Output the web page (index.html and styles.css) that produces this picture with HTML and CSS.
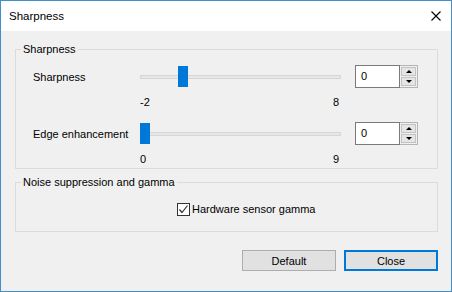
FILE: index.html
```html
<!DOCTYPE html>
<html lang="en">
<head>
    <meta charset="UTF-8">
    <title>Sharpness</title>
    <link rel="stylesheet" href="styles.css">
</head>
<body>
    <div class="window">
        <div class="titlebar">
            <span class="title">Sharpness</span>
            <svg class="close" width="10" height="10" viewBox="0 0 10 10">
                <path d="M0.5 0.5 L9.5 9.5 M9.5 0.5 L0.5 9.5" stroke="#000" stroke-width="1.1" fill="none"/>
            </svg>
        </div>

        <div class="client">
            <fieldset class="group group-sharpness">
                <legend>Sharpness</legend>

                <div class="setting">
                    <span class="setting-label">Sharpness</span>
                    <div class="slider">
                        <div class="track"></div>
                        <div class="thumb" style="left: calc((100% - 10px) * 0.2)"></div>
                    </div>
                    <div class="spin">
                        <div class="spin-edit">0</div>
                        <div class="spin-buttons">
                            <div class="spin-btn"><span class="arrow-up"></span></div>
                            <div class="spin-btn"><span class="arrow-down"></span></div>
                        </div>
                    </div>
                    <div class="ticks"><span>-2</span><span>8</span></div>
                </div>

                <div class="setting setting-second">
                    <span class="setting-label">Edge enhancement</span>
                    <div class="slider">
                        <div class="track"></div>
                        <div class="thumb" style="left: calc((100% - 10px) * 0)"></div>
                    </div>
                    <div class="spin">
                        <div class="spin-edit">0</div>
                        <div class="spin-buttons">
                            <div class="spin-btn"><span class="arrow-up"></span></div>
                            <div class="spin-btn"><span class="arrow-down"></span></div>
                        </div>
                    </div>
                    <div class="ticks"><span>0</span><span>9</span></div>
                </div>
            </fieldset>

            <fieldset class="group group-noise">
                <legend>Noise suppression and gamma</legend>
                <label class="check">
                    <span class="check-box">
                        <svg width="11" height="11" viewBox="0 0 11 11">
                            <path d="M1.5 5.5 L4 8.5 L9.5 1.5" stroke="#333" stroke-width="1.2" fill="none"/>
                        </svg>
                    </span>
                    Hardware sensor gamma
                </label>
            </fieldset>

            <div class="buttons">
                <button type="button">Default</button>
                <button type="button" class="primary">Close</button>
            </div>
        </div>
    </div>
</body>
</html>
```

FILE: styles.css
```css
body {
    margin: 0;
    font-family: "Liberation Sans", Arial, sans-serif;
    font-size: 11px;
    color: #000;
}

.window {
    width: 452px;
    height: 292px;
    box-sizing: border-box;
    border: 1px solid #3f8fc9;
    display: flex;
    flex-direction: column;
}

.titlebar {
    height: 30px;
    background: #fff;
    display: flex;
    align-items: center;
    justify-content: space-between;
    padding: 0 10px 0 8px;
}

.title {
    font-size: 11.5px;
    margin-top: -1px;
}

.client {
    flex: 1;
    background: #f0f0f0;
    padding: 0 13px 0 14px;
    display: flex;
    flex-direction: column;
}

.group {
    margin: 0;
    padding: 0;
    min-inline-size: 0;
    border: 1px solid #dcdcdc;
}

.group legend {
    margin-left: 5px;
    padding: 0 2px;
    line-height: 14px;
}

.group-sharpness {
    margin-top: 11px;
    padding-bottom: 2px;
}

.group-noise {
    margin-top: 6px;
    padding-bottom: 15px;
}

.setting {
    display: grid;
    grid-template-columns: 107px 201px 77px;
    grid-template-rows: 23px 14px;
    row-gap: 7px;
    margin: 9px 0 0 17px;
}

.setting-second {
    margin-top: 13px;
}

.setting-label {
    align-self: center;
    line-height: 14px;
}

.slider {
    position: relative;
}

.track {
    margin-top: 10px;
    height: 2px;
    border: 1px solid #d6d6d6;
    background: #e7e7e7;
}

.thumb {
    position: absolute;
    top: 1px;
    width: 10px;
    height: 21px;
    background: #0078d7;
}

.spin {
    justify-self: end;
    width: 63px;
    height: 23px;
    display: flex;
}

.spin-edit {
    flex: 1;
    background: #fff;
    border: 1px solid #7a7a7a;
    padding-left: 5px;
    line-height: 21px;
}

.spin-buttons {
    width: 15px;
    border: 1px solid #b5b5b5;
    border-left: none;
    padding: 1px;
    display: flex;
    flex-direction: column;
    gap: 1px;
}

.spin-btn {
    flex: 1;
    background: #e5e5e5;
    border: 1px solid #c3c3c3;
    display: flex;
    align-items: center;
    justify-content: center;
}

.arrow-up {
    border-left: 3px solid transparent;
    border-right: 3px solid transparent;
    border-bottom: 3px solid #000;
}

.arrow-down {
    border-left: 3px solid transparent;
    border-right: 3px solid transparent;
    border-top: 3px solid #000;
}

.ticks {
    grid-column: 2;
    display: flex;
    justify-content: space-between;
    padding-right: 2px;
    line-height: 14px;
}

.check {
    display: flex;
    align-items: center;
    gap: 2px;
    margin: 13px 0 0 161px;
    line-height: 14px;
}

.check-box {
    width: 11px;
    height: 11px;
    border: 1px solid #333;
    background: #fff;
    display: flex;
}

.buttons {
    display: flex;
    justify-content: flex-end;
    gap: 8px;
    margin-top: 18px;
}

.buttons button {
    width: 94px;
    height: 21px;
    padding: 0;
    background: #e1e1e1;
    border: 1px solid #adadad;
    font-family: inherit;
    font-size: 11px;
    color: #000;
}

.buttons button.primary {
    border: 2px solid #0078d7;
}
```
